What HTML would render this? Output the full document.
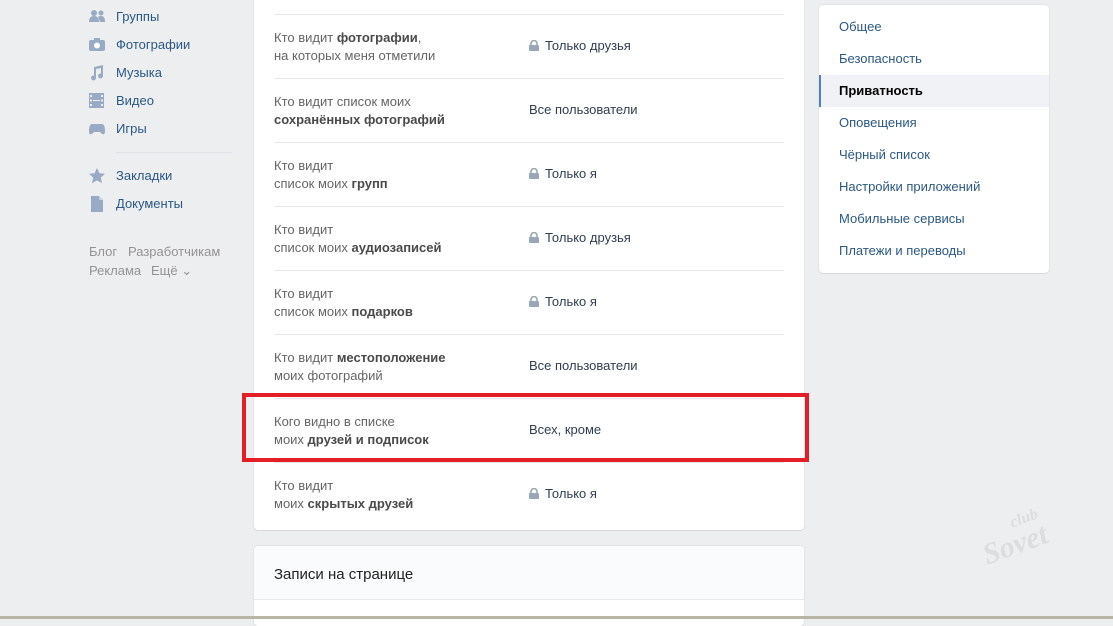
<!DOCTYPE html>
<html><head><meta charset="utf-8"><style>
*{margin:0;padding:0;box-sizing:border-box}
body{width:1113px;height:619px;background:#edeef0;font-family:"Liberation Sans",Arial,sans-serif;font-size:13px;position:relative;overflow:hidden}
.a{position:absolute}
.nav{left:89px;color:#2a5885;font-size:13px}
.nav svg{position:absolute;left:0;top:0}
.nav span{position:absolute;left:27px;top:0;white-space:nowrap}
.card{background:#fff;border-radius:0 0 4px 4px;box-shadow:0 1px 0 #d7d8db,0 0 0 1px #e3e4e8}
.row{position:absolute;left:20px;width:510px;height:64px;border-top:1px solid #e7e8ec}
.lab{position:absolute;left:0;top:14px;line-height:18px;color:#656565}
.lab b{color:#4a4a4a}
.val{position:absolute;left:255px;top:23px;color:#2f3d50;white-space:nowrap}
.lock{display:inline-block;width:10px;height:11px;vertical-align:-1px;margin-right:6px}
.m{position:absolute;left:20px;color:#2a5885}
.f{color:#939393;position:absolute}
</style></head><body>
<div class="a nav" style="top:9px"><svg width="16" height="14"><circle cx="5" cy="4" r="3" fill="#99abc4"/><circle cx="12" cy="4" r="2.5" fill="#99abc4"/><path d="M0 13c0-4 2-6 5-6s5 2 5 6zM9 8c1-1 2-1 3-1 3 0 4 2 4 6h-5" fill="#99abc4"/></svg><span>Группы</span></div>
<div class="a nav" style="top:37px"><svg width="16" height="14" style="top:1px"><rect x="0" y="2" width="16" height="11" rx="2" fill="#99abc4"/><rect x="5" y="0" width="6" height="3" fill="#99abc4"/><circle cx="8" cy="7.5" r="3" fill="#fff"/></svg><span>Фотографии</span></div>
<div class="a nav" style="top:65px"><svg width="16" height="16"><path d="M5 2l9-2v11a2.5 2.5 0 1 1-2-2.5V3L7 4v9a2.5 2.5 0 1 1-2-2.5z" fill="#99abc4"/></svg><span>Музыка</span></div>
<div class="a nav" style="top:93px"><svg width="16" height="15"><rect x="0" y="0" width="15" height="15" fill="#99abc4"/><g fill="#edeef0"><rect x="1" y="2" width="2" height="2"/><rect x="1" y="6.5" width="2" height="2"/><rect x="1" y="11" width="2" height="2"/><rect x="12" y="2" width="2" height="2"/><rect x="12" y="6.5" width="2" height="2"/><rect x="12" y="11" width="2" height="2"/><rect x="4" y="7" width="7" height="1"/></g></svg><span>Видео</span></div>
<div class="a nav" style="top:121px"><svg width="16" height="14" style="top:1px"><path d="M3 2h10c2 0 3 3 3 7s-2 4-4 2l-1-1H5l-1 1c-2 2-4 2-4-2s1-7 3-7z" fill="#99abc4"/></svg><span>Игры</span></div>
<div class="a" style="left:116px;top:152px;width:116px;height:1px;background:#dfe2e8"></div>
<div class="a nav" style="top:168px"><svg width="16" height="16"><path d="M8 0l2.4 5.2 5.6.6-4.2 3.8 1.2 5.6L8 12.4 3 15.2l1.2-5.6L0 5.8l5.6-.6z" fill="#99abc4"/></svg><span>Закладки</span></div>
<div class="a nav" style="top:196px"><svg width="16" height="16"><path d="M2 0h8l4 4v12H2z" fill="#99abc4"/><path d="M10 0v4h4" fill="#c8d3e0"/></svg><span>Документы</span></div>
<div class="f" style="left:89px;top:244px">Блог</div><div class="f" style="left:128px;top:244px">Разработчикам</div>
<div class="f" style="left:89px;top:263px">Реклама</div><div class="f" style="left:151px;top:263px">Ещё ⌄</div>

<div class="a card" style="left:254px;top:-10px;width:550px;height:540px">
 <div class="row" style="top:24px"><div class="lab">Кто видит <b>фотографии</b>,<br>на которых меня отметили</div><div class="val"><svg class="lock" viewBox="0 0 10 11"><path d="M2 5V3.5a3 3 0 0 1 6 0V5" stroke="#9aa6b5" stroke-width="1.6" fill="none"/><rect x="0" y="5" width="10" height="6" rx="1" fill="#9aa6b5"/></svg>Только друзья</div></div>
 <div class="row" style="top:88px"><div class="lab">Кто видит список моих<br><b>сохранённых фотографий</b></div><div class="val">Все пользователи</div></div>
 <div class="row" style="top:152px"><div class="lab">Кто видит<br>список моих <b>групп</b></div><div class="val"><svg class="lock" viewBox="0 0 10 11"><path d="M2 5V3.5a3 3 0 0 1 6 0V5" stroke="#9aa6b5" stroke-width="1.6" fill="none"/><rect x="0" y="5" width="10" height="6" rx="1" fill="#9aa6b5"/></svg>Только я</div></div>
 <div class="row" style="top:216px"><div class="lab">Кто видит<br>список моих <b>аудиозаписей</b></div><div class="val"><svg class="lock" viewBox="0 0 10 11"><path d="M2 5V3.5a3 3 0 0 1 6 0V5" stroke="#9aa6b5" stroke-width="1.6" fill="none"/><rect x="0" y="5" width="10" height="6" rx="1" fill="#9aa6b5"/></svg>Только друзья</div></div>
 <div class="row" style="top:280px"><div class="lab">Кто видит<br>список моих <b>подарков</b></div><div class="val"><svg class="lock" viewBox="0 0 10 11"><path d="M2 5V3.5a3 3 0 0 1 6 0V5" stroke="#9aa6b5" stroke-width="1.6" fill="none"/><rect x="0" y="5" width="10" height="6" rx="1" fill="#9aa6b5"/></svg>Только я</div></div>
 <div class="row" style="top:344px"><div class="lab">Кто видит <b>местоположение</b><br>моих фотографий</div><div class="val">Все пользователи</div></div>
 <div class="row" style="top:408px"><div class="lab">Кого видно в списке<br>моих <b>друзей и подписок</b></div><div class="val">Всех, кроме</div></div>
 <div class="row" style="top:472px"><div class="lab">Кто видит<br>моих <b>скрытых друзей</b></div><div class="val"><svg class="lock" viewBox="0 0 10 11"><path d="M2 5V3.5a3 3 0 0 1 6 0V5" stroke="#9aa6b5" stroke-width="1.6" fill="none"/><rect x="0" y="5" width="10" height="6" rx="1" fill="#9aa6b5"/></svg>Только я</div></div>
</div>
<div class="a" style="left:242px;top:393px;width:567px;height:69px;border:4px solid #e41e26"></div>

<div class="a card" style="left:254px;top:546px;width:550px;height:80px;border-radius:4px;background:#fff">
 <div style="height:54px;background:#fafbfc;border-bottom:1px solid #e7e8ec;border-radius:4px 4px 0 0;padding:20px 20px;font-size:15px;color:#222">Записи на странице</div>
</div>

<div class="a card" style="left:819px;top:5px;width:230px;height:268px;border-radius:4px">
 <div class="m" style="top:14px">Общее</div>
 <div class="m" style="top:46px">Безопасность</div>
 <div class="a" style="left:0;top:70px;width:230px;height:32px;background:#f0f2f5;border-left:2px solid #5181b8"></div>
 <div class="m" style="top:78px;color:#000;font-weight:bold">Приватность</div>
 <div class="m" style="top:110px">Оповещения</div>
 <div class="m" style="top:142px">Чёрный список</div>
 <div class="m" style="top:174px">Настройки приложений</div>
 <div class="m" style="top:206px">Мобильные сервисы</div>
 <div class="m" style="top:238px">Платежи и переводы</div>
</div>

<div class="a" style="left:1010px;top:510px;color:#dcdddf;font:italic bold 16px 'Liberation Serif',serif;transform:rotate(-20deg)">club</div>
<div class="a" style="left:982px;top:528px;color:#dcdddf;font:italic bold 30px 'Liberation Serif',serif;transform:rotate(-20deg)">Sovet</div>
<div class="a" style="left:0;top:616px;width:1113px;height:3px;background:#b8b5a5"></div>
</body></html>
